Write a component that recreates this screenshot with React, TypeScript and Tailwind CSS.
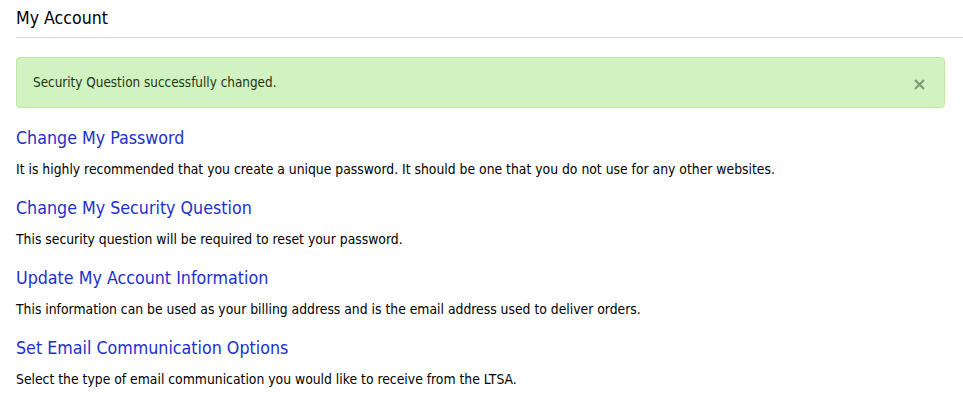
export default function App() {
  const sections = [
    { title: "Change My Password", text: "It is highly recommended that you create a unique password. It should be one that you do not use for any other websites." },
    { title: "Change My Security Question", text: "This security question will be required to reset your password." },
    { title: "Update My Account Information", text: "This information can be used as your billing address and is the email address used to deliver orders." },
    { title: "Set Email Communication Options", text: "Select the type of email communication you would like to receive from the LTSA." },
  ];
  return (
    <div className="w-[963px] h-[402px] bg-white pl-4 overflow-hidden text-black" style={{ fontFamily: "Tahoma, 'DejaVu Sans Condensed', 'DejaVu Sans', sans-serif" }}>
      <div className="h-[38px] border-b border-[#d4d4d4] flex items-center text-[17.6px] leading-none pt-[1px]">My Account</div>
      <div className="pr-[18px]">
        <div className="mt-[19px] h-[51px] rounded-[4px] border border-[#bde8a6] bg-[#d1f2c1] flex items-center justify-between pl-4 pr-[18px] text-[13.4px] text-[#1e3614]">
          <span className="pt-[2px]">Security Question successfully changed.</span>
          <svg width="13" height="13" viewBox="0 0 13 13" className="mt-[3px]">
            <path d="M2 2 L11 11 M11 2 L2 11" stroke="#7e9c76" strokeWidth="2.2" />
          </svg>
        </div>
      </div>
      <div className="flex flex-col pt-[19px]">
        {sections.map((s) => (
          <div key={s.title} className="h-[70px]">
            <div className="text-[17.7px] leading-[22px] text-[#1b30cc]">{s.title}</div>
            <div className="mt-[12px] text-[13.8px] leading-[16px]">{s.text}</div>
          </div>
        ))}
      </div>
    </div>
  );
}
